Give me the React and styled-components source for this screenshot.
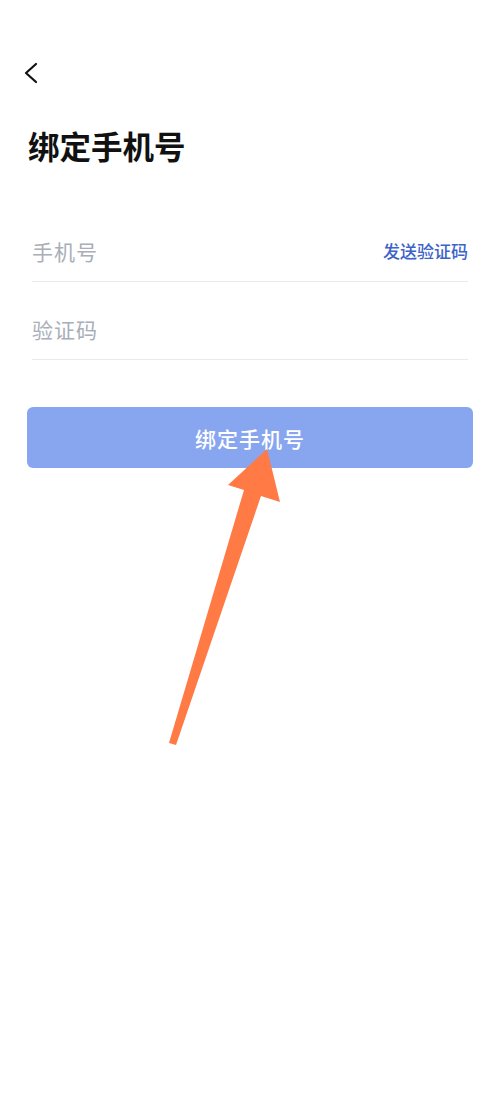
import styled, { createGlobalStyle } from 'styled-components'

const GlobalStyle = createGlobalStyle`
  html, body {
    margin: 0;
    padding: 0;
    background: #ffffff;
  }
  body {
    font-family: "Noto Sans CJK SC", "Noto Sans", sans-serif;
  }
`

const ArrowMark = () => (
  <Overlay width="500" height="1111" viewBox="0 0 500 1111">
    <polygon
      points="267,449 280,502 261,496 176,745 169,743 244,490 228,485"
      fill="#ff7a45"
    />
  </Overlay>
)

export default function App() {
  return (
    <Page>
      <GlobalStyle />
      <NavBar>
        <BackButton>
          <svg width="20" height="24" viewBox="0 0 20 24">
            <path d="M14 3 L4 12 L14 21" fill="none" stroke="#111" strokeWidth="2.2" strokeLinecap="round" strokeLinejoin="round" />
          </svg>
        </BackButton>
      </NavBar>

      <Title>绑定手机号</Title>

      <Form>
        <Field>
          <Placeholder>手机号</Placeholder>
          <SendCode>发送验证码</SendCode>
        </Field>
        <Field>
          <Placeholder>验证码</Placeholder>
        </Field>
      </Form>

      <SubmitButton>绑定手机号</SubmitButton>

      <ArrowMark />
    </Page>
  )
}

const Page = styled.div`
  position: relative;
  width: 500px;
  height: 1111px;
  box-sizing: border-box;
  padding: 0 27px;
  background: #fff;
  overflow: hidden;
`

const NavBar = styled.div`
  padding-top: 61px;
  height: 24px;
  display: flex;
  align-items: center;
`

const BackButton = styled.div`
  width: 20px;
  height: 24px;
  margin-left: -5px;
  display: flex;
`

const Title = styled.h1`
  margin: 38px 0 0 1px;
  font-size: 31.5px;
  line-height: 44px;
  font-weight: 700;
  color: #111;
`

const Form = styled.div`
  margin: 37px 5px 0;
`

const Field = styled.div`
  height: 77px;
  display: flex;
  align-items: flex-end;
  justify-content: space-between;
  border-bottom: 1px solid #e9e9ec;

  & > * {
    margin-bottom: 15px;
  }
`

const Placeholder = styled.span`
  font-size: 21px;
  line-height: 30px;
  color: #a9aeb8;
  letter-spacing: 1px;
`

const SendCode = styled.span`
  font-size: 17px;
  line-height: 30px;
  font-weight: 500;
  color: #3b63c9;
`

const SubmitButton = styled.div`
  margin-top: 47px;
  height: 61px;
  border-radius: 6px;
  background: #88a6f0;
  color: #fff;
  font-size: 21px;
  font-weight: 500;
  display: flex;
  align-items: center;
  justify-content: center;
  letter-spacing: 1px;
`

const Overlay = styled.svg`
  position: absolute;
  left: 0;
  top: 0;
  pointer-events: none;
`
